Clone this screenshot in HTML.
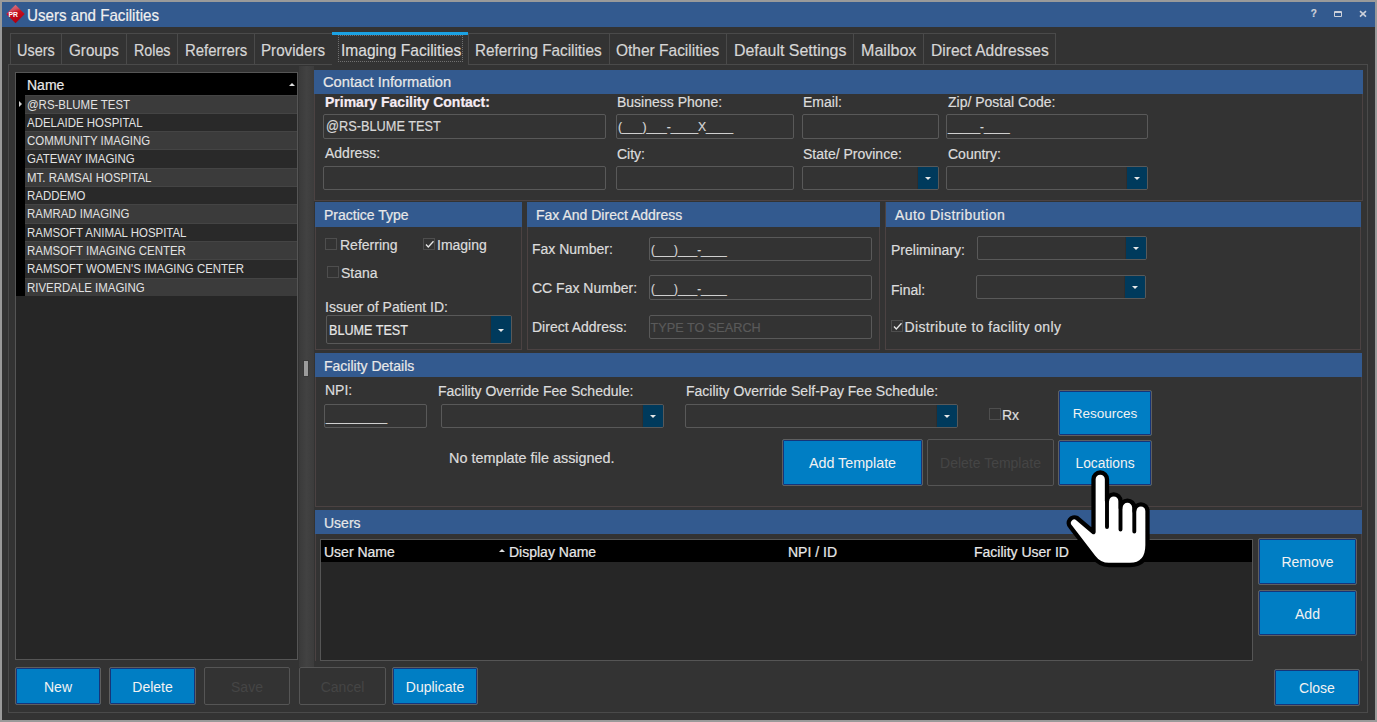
<!DOCTYPE html>
<html><head><meta charset="utf-8">
<style>
*{box-sizing:border-box;margin:0;padding:0}
html,body{width:1377px;height:722px;overflow:hidden;background:#9a9a9a;font-family:"Liberation Sans",sans-serif;color:#dcdcdc;position:relative}
.a{position:absolute}
.t{position:absolute;white-space:nowrap;line-height:1}
.b{position:absolute;white-space:nowrap;line-height:0;height:0;-webkit-text-stroke:0.2px currentColor}
.hdr{position:absolute;background:#335a8f}
.box{position:absolute;border:1px solid #595959;background:#333;border-radius:2px}
.dd{position:absolute;top:0;right:0;bottom:0;width:20px;background:#003a5c;border-radius:0 1px 1px 0;box-shadow:-1px 0 0 #2e2e2e}
.dd:after{content:"";position:absolute;left:7px;top:50%;margin-top:-1px;border-left:3px solid transparent;border-right:3px solid transparent;border-top:3px solid #e8e8e8}
.btn{position:absolute;border-radius:2px;border:1px solid #5f5f5f;background:#007ec4;box-shadow:inset 0 0 0 1px #15357a;color:#f2f2f2;text-align:center;white-space:nowrap}
.dis{position:absolute;border-radius:2px;border:1px solid #555;background:#333;color:#454545;text-align:center;white-space:nowrap}
.cb{position:absolute;width:12px;height:12px;border:1px solid #4e4e4e}
</style></head><body>
<div class="a" style="left:2px;top:2px;width:1373px;height:718px;background:#333333"></div>
<div class="a" style="left:2px;top:2px;width:1373px;height:25px;background:#335a8f"></div>
<svg class="a" style="left:5px;top:4px" width="21" height="21" viewBox="0 0 21 21">
 <defs><linearGradient id="g1" x1="0" y1="0" x2="0.3" y2="1"><stop offset="0" stop-color="#e08088"/><stop offset="0.35" stop-color="#d05060"/><stop offset="0.5" stop-color="#c81020"/><stop offset="1" stop-color="#b00010"/></linearGradient></defs>
 <path d="M10.5 0.8 L19.7 10 L10.5 19.2 L1.2 10 Z" fill="url(#g1)"/>
 <text x="3.4" y="12.8" font-family="Liberation Sans" font-weight="bold" font-size="6.8" fill="#fff">PR</text>
</svg>
<div class="b" style="left:26.5px;top:14.57px;font-size:16.5px;color:#f0f0f0;transform:scaleX(0.917);transform-origin:0 0">Users and Facilities</div>
<div class="b" style="left:1310.8px;top:13.73px;font-size:10px;color:#cdd1da;font-weight:bold">?</div>
<div class="a" style="left:1334px;top:11px;width:8px;height:6px;border:1.5px solid #cdd1da;border-top:2.5px solid #cdd1da;border-radius:1px"></div>
<svg class="a" style="left:1359px;top:10px" width="8" height="8" viewBox="0 0 8 8"><path d="M1 1.2L7 6.6M7 1.2L1 6.6" stroke="#cdd1da" stroke-width="1.6"/></svg>
<div class="a" style="left:10px;top:33px;width:52px;height:32px;border:1px solid #4a4a4a;border-bottom:none"></div>
<div class="b" style="left:17.2px;top:50.38px;font-size:16.2px;color:#d6d6d6;transform:scaleX(0.893);transform-origin:0 0">Users</div>
<div class="a" style="left:61px;top:33px;width:66px;height:32px;border:1px solid #4a4a4a;border-bottom:none"></div>
<div class="b" style="left:69px;top:50.38px;font-size:16.2px;color:#d6d6d6;transform:scaleX(0.94);transform-origin:0 0">Groups</div>
<div class="a" style="left:126px;top:33px;width:52px;height:32px;border:1px solid #4a4a4a;border-bottom:none"></div>
<div class="b" style="left:133.8px;top:50.38px;font-size:16.2px;color:#d6d6d6;transform:scaleX(0.882);transform-origin:0 0">Roles</div>
<div class="a" style="left:177px;top:33px;width:78px;height:32px;border:1px solid #4a4a4a;border-bottom:none"></div>
<div class="b" style="left:184.6px;top:50.38px;font-size:16.2px;color:#d6d6d6;transform:scaleX(0.923);transform-origin:0 0">Referrers</div>
<div class="a" style="left:254px;top:33px;width:79px;height:32px;border:1px solid #4a4a4a;border-bottom:none"></div>
<div class="b" style="left:261.3px;top:50.38px;font-size:16.2px;color:#d6d6d6;transform:scaleX(0.937);transform-origin:0 0">Providers</div>
<div class="a" style="left:468px;top:33px;width:142px;height:32px;border:1px solid #4a4a4a;border-bottom:none"></div>
<div class="b" style="left:475.3px;top:50.38px;font-size:16.2px;color:#d6d6d6;transform:scaleX(0.945);transform-origin:0 0">Referring Facilities</div>
<div class="a" style="left:609px;top:33px;width:118px;height:32px;border:1px solid #4a4a4a;border-bottom:none"></div>
<div class="b" style="left:616.4px;top:50.38px;font-size:16.2px;color:#d6d6d6;transform:scaleX(0.957);transform-origin:0 0">Other Facilities</div>
<div class="a" style="left:726px;top:33px;width:128px;height:32px;border:1px solid #4a4a4a;border-bottom:none"></div>
<div class="b" style="left:734.4px;top:50.38px;font-size:16.2px;color:#d6d6d6;transform:scaleX(0.983);transform-origin:0 0">Default Settings</div>
<div class="a" style="left:853px;top:33px;width:71px;height:32px;border:1px solid #4a4a4a;border-bottom:none"></div>
<div class="b" style="left:861.2px;top:50.38px;font-size:16.2px;color:#d6d6d6;transform:scaleX(0.993);transform-origin:0 0">Mailbox</div>
<div class="a" style="left:923px;top:33px;width:133px;height:32px;border:1px solid #4a4a4a;border-bottom:none"></div>
<div class="b" style="left:931.2px;top:50.38px;font-size:16.2px;color:#d6d6d6;transform:scaleX(0.962);transform-origin:0 0">Direct Addresses</div>
<div class="a" style="left:8px;top:64px;width:1360px;height:649px;border:1px solid #4a4a4a"></div>
<div class="a" style="left:332px;top:32px;width:136px;height:34px;background:#333333"></div>
<div class="a" style="left:332px;top:32px;width:136px;height:3px;background:#1ba2e3"></div>
<div class="a" style="left:338px;top:35px;width:125px;height:27px;border:1px dotted #707070"></div>
<div class="b" style="left:340.8px;top:50.38px;font-size:16.2px;color:#dcdcdc;transform:scaleX(0.962);transform-origin:0 0">Imaging Facilities</div>
<div class="a" style="left:15px;top:72px;width:283px;height:588px;border:1px solid #555;background:#262626"></div>
<div class="a" style="left:16px;top:73px;width:281px;height:22px;background:#000"></div>
<div class="b" style="left:27px;top:85.14px;font-size:14px;color:#e8e8e8;">Name</div>
<div class="a" style="left:289px;top:83px;width:0;height:0;border-left:3px solid transparent;border-right:3px solid transparent;border-bottom:3px solid #dddddd"></div>
<div class="a" style="left:25px;top:95px;width:272px;height:18px;background:#3b3b3b;border-top:1px solid #444"></div>
<div class="b" style="left:27px;top:105.16px;font-size:12.5px;color:#e2e2e2;transform:scaleX(0.916);transform-origin:0 0;-webkit-text-stroke:0">@RS-BLUME TEST</div>
<div class="a" style="left:25px;top:113px;width:272px;height:18px;background:#292929;border-top:1px solid #444"></div>
<div class="b" style="left:27px;top:123.16px;font-size:12.5px;color:#e2e2e2;transform:scaleX(0.916);transform-origin:0 0;-webkit-text-stroke:0">ADELAIDE HOSPITAL</div>
<div class="a" style="left:25px;top:131px;width:272px;height:18px;background:#3b3b3b;border-top:1px solid #444"></div>
<div class="b" style="left:27px;top:141.16px;font-size:12.5px;color:#e2e2e2;transform:scaleX(0.916);transform-origin:0 0;-webkit-text-stroke:0">COMMUNITY IMAGING</div>
<div class="a" style="left:25px;top:149px;width:272px;height:19px;background:#292929;border-top:1px solid #444"></div>
<div class="b" style="left:27px;top:159.16px;font-size:12.5px;color:#e2e2e2;transform:scaleX(0.916);transform-origin:0 0;-webkit-text-stroke:0">GATEWAY IMAGING</div>
<div class="a" style="left:25px;top:168px;width:272px;height:18px;background:#3b3b3b;border-top:1px solid #444"></div>
<div class="b" style="left:27px;top:178.16px;font-size:12.5px;color:#e2e2e2;transform:scaleX(0.916);transform-origin:0 0;-webkit-text-stroke:0">MT. RAMSAI HOSPITAL</div>
<div class="a" style="left:25px;top:186px;width:272px;height:18px;background:#292929;border-top:1px solid #444"></div>
<div class="b" style="left:27px;top:196.16px;font-size:12.5px;color:#e2e2e2;transform:scaleX(0.916);transform-origin:0 0;-webkit-text-stroke:0">RADDEMO</div>
<div class="a" style="left:25px;top:204px;width:272px;height:19px;background:#3b3b3b;border-top:1px solid #444"></div>
<div class="b" style="left:27px;top:214.16px;font-size:12.5px;color:#e2e2e2;transform:scaleX(0.916);transform-origin:0 0;-webkit-text-stroke:0">RAMRAD IMAGING</div>
<div class="a" style="left:25px;top:223px;width:272px;height:18px;background:#292929;border-top:1px solid #444"></div>
<div class="b" style="left:27px;top:233.16px;font-size:12.5px;color:#e2e2e2;transform:scaleX(0.916);transform-origin:0 0;-webkit-text-stroke:0">RAMSOFT ANIMAL HOSPITAL</div>
<div class="a" style="left:25px;top:241px;width:272px;height:18px;background:#3b3b3b;border-top:1px solid #444"></div>
<div class="b" style="left:27px;top:251.16px;font-size:12.5px;color:#e2e2e2;transform:scaleX(0.916);transform-origin:0 0;-webkit-text-stroke:0">RAMSOFT IMAGING CENTER</div>
<div class="a" style="left:25px;top:259px;width:272px;height:19px;background:#292929;border-top:1px solid #444"></div>
<div class="b" style="left:27px;top:269.16px;font-size:12.5px;color:#e2e2e2;transform:scaleX(0.916);transform-origin:0 0;-webkit-text-stroke:0">RAMSOFT WOMEN'S IMAGING CENTER</div>
<div class="a" style="left:25px;top:278px;width:272px;height:18px;background:#3b3b3b;border-top:1px solid #444"></div>
<div class="b" style="left:27px;top:288.16px;font-size:12.5px;color:#e2e2e2;transform:scaleX(0.916);transform-origin:0 0;-webkit-text-stroke:0">RIVERDALE IMAGING</div>
<div class="a" style="left:16px;top:95px;width:9px;height:201px;background:#000"></div>
<div class="a" style="left:19px;top:101px;width:0;height:0;border-top:3px solid transparent;border-bottom:3px solid transparent;border-left:3px solid #cfcfcf"></div>
<div class="a" style="left:299px;top:66px;width:15px;height:601px;background:linear-gradient(90deg,#3a3a3a,#424242 50%,#3c3c3c)"></div>
<div class="a" style="left:304px;top:361px;width:4px;height:15px;background:#9c9c9c;box-shadow:0 0 0 1px #393939"></div>
<div class="a" style="left:314px;top:70px;width:1049px;height:131px;border:1px solid #4b4242"></div>
<div class="hdr" style="left:314px;top:70px;width:1049px;height:24px"></div>
<div class="b" style="left:323px;top:82.4px;font-size:14.7px;color:#e8e8e8;">Contact Information</div>
<div class="b" style="left:325px;top:102.14px;font-size:14px;color:#f6ecf4;"><b>Primary Facility Contact:</b></div>
<div class="b" style="left:617px;top:102.14px;font-size:14px;">Business Phone:</div>
<div class="b" style="left:803px;top:102.14px;font-size:14px;">Email:</div>
<div class="b" style="left:948px;top:102.14px;font-size:14px;">Zip/ Postal Code:</div>
<div class="box" style="left:323px;top:114px;width:283px;height:25px;"></div>
<div class="b" style="left:325.5px;top:126.47px;font-size:14.5px;color:#d8d8d8;transform:scaleX(0.88);transform-origin:0 0">@RS-BLUME TEST</div>
<div class="box" style="left:616px;top:114px;width:178px;height:25px;"></div>
<div class="b" style="left:618px;top:126.59px;font-size:12.7px;color:#d8d8d8;transform:scaleX(0.96);transform-origin:0 0">(___)___-____X____</div>
<div class="box" style="left:802px;top:114px;width:137px;height:25px;"></div>
<div class="box" style="left:946px;top:114px;width:202px;height:25px;"></div>
<div class="b" style="left:948px;top:126.59px;font-size:12.7px;color:#d8d8d8;transform:scaleX(0.91);transform-origin:0 0">_____-____</div>
<div class="b" style="left:325px;top:153.14px;font-size:14px;">Address:</div>
<div class="b" style="left:617px;top:154.14px;font-size:14px;">City:</div>
<div class="b" style="left:803px;top:154.14px;font-size:14px;">State/ Province:</div>
<div class="b" style="left:948px;top:154.14px;font-size:14px;">Country:</div>
<div class="box" style="left:323px;top:166px;width:283px;height:24px;"></div>
<div class="box" style="left:616px;top:166px;width:178px;height:24px;"></div>
<div class="box" style="left:802px;top:166px;width:137px;height:24px;"><div class="dd"></div></div>
<div class="box" style="left:946px;top:166px;width:202px;height:24px;"><div class="dd"></div></div>
<div class="a" style="left:315px;top:202px;width:207px;height:148px;border:1px solid #4b4242"></div>
<div class="hdr" style="left:315px;top:202px;width:207px;height:25px"></div>
<div class="b" style="left:324px;top:214.64px;font-size:14px;color:#e8e8e8;">Practice Type</div>
<div class="cb" style="left:325px;top:238px"></div>
<div class="b" style="left:340px;top:245.14px;font-size:14px;">Referring</div>
<div class="cb" style="left:423px;top:238px"><svg width="11" height="11" viewBox="0 0 11 11" style="position:absolute;left:0;top:0"><path d="M2 5.5 L4.3 8 L9.5 2.2" stroke="#e6e6e6" stroke-width="1.3" fill="none"/></svg></div>
<div class="b" style="left:437px;top:245.14px;font-size:14px;">Imaging</div>
<div class="cb" style="left:327px;top:266px"></div>
<div class="b" style="left:341px;top:273.14px;font-size:14px;">Stana</div>
<div class="b" style="left:325px;top:307.14px;font-size:14px;">Issuer of Patient ID:</div>
<div class="box" style="left:326px;top:315px;width:186px;height:29px;"><div class="dd"></div></div>
<div class="b" style="left:328.8px;top:330.47px;font-size:14.5px;color:#e6e6e6;transform:scaleX(0.87);transform-origin:0 0">BLUME TEST</div>
<div class="a" style="left:527px;top:202px;width:353px;height:148px;border:1px solid #4b4242"></div>
<div class="hdr" style="left:527px;top:202px;width:353px;height:25px"></div>
<div class="b" style="left:536px;top:214.64px;font-size:14px;color:#e8e8e8;">Fax And Direct Address</div>
<div class="b" style="left:532px;top:249.14px;font-size:14px;">Fax Number:</div>
<div class="b" style="left:532px;top:288.14px;font-size:14px;">CC Fax Number:</div>
<div class="b" style="left:532px;top:327.14px;font-size:14px;">Direct Address:</div>
<div class="box" style="left:649px;top:237px;width:223px;height:24px;"></div>
<div class="b" style="left:650.5px;top:249.59px;font-size:12.7px;color:#d8d8d8;transform:scaleX(0.91);transform-origin:0 0">(___)___-____</div>
<div class="box" style="left:649px;top:275px;width:223px;height:25px;"></div>
<div class="b" style="left:650.5px;top:288.59px;font-size:12.7px;color:#d8d8d8;transform:scaleX(0.91);transform-origin:0 0">(___)___-____</div>
<div class="box" style="left:649px;top:315px;width:223px;height:24px;"></div>
<div class="b" style="left:650.5px;top:327.59px;font-size:12.7px;color:#5a5a5a;">TYPE TO SEARCH</div>
<div class="a" style="left:885px;top:202px;width:476px;height:148px;border:1px solid #4b4242"></div>
<div class="hdr" style="left:886px;top:202px;width:475px;height:25px"></div>
<div class="b" style="left:895px;top:214.64px;font-size:14px;color:#e8e8e8;letter-spacing:0.44px">Auto Distribution</div>
<div class="b" style="left:891px;top:249.64px;font-size:14px;">Preliminary:</div>
<div class="b" style="left:891px;top:290.14px;font-size:14px;">Final:</div>
<div class="box" style="left:977px;top:236px;width:170px;height:24px;"><div class="dd"></div></div>
<div class="box" style="left:976px;top:275px;width:170px;height:24px;"><div class="dd"></div></div>
<div class="cb" style="left:890.5px;top:320px"><svg width="11" height="11" viewBox="0 0 11 11" style="position:absolute;left:0;top:0"><path d="M2 5.5 L4.3 8 L9.5 2.2" stroke="#e6e6e6" stroke-width="1.3" fill="none"/></svg></div>
<div class="b" style="left:904.5px;top:327.14px;font-size:14px;letter-spacing:0.36px">Distribute to facility only</div>
<div class="a" style="left:315px;top:353px;width:1047px;height:154px;border:1px solid #4b4242"></div>
<div class="hdr" style="left:315px;top:353px;width:1047px;height:24px"></div>
<div class="b" style="left:324px;top:365.64px;font-size:14px;color:#e8e8e8;">Facility Details</div>
<div class="b" style="left:325px;top:390.14px;font-size:14px;">NPI:</div>
<div class="b" style="left:438px;top:391.14px;font-size:14px;">Facility Override Fee Schedule:</div>
<div class="b" style="left:686px;top:391.14px;font-size:14px;">Facility Override Self-Pay Fee Schedule:</div>
<div class="box" style="left:324px;top:404px;width:103px;height:24px;"></div>
<div class="b" style="left:326px;top:416.59px;font-size:12.7px;color:#d8d8d8;transform:scaleX(0.96);transform-origin:0 0">_________</div>
<div class="box" style="left:441px;top:404px;width:223px;height:24px;"><div class="dd"></div></div>
<div class="box" style="left:685px;top:404px;width:273px;height:24px;"><div class="dd"></div></div>
<div class="cb" style="left:989px;top:408px"></div>
<div class="b" style="left:1002px;top:415.14px;font-size:14px;">Rx</div>
<div class="btn" style="left:1058px;top:390px;width:94px;height:46px;line-height:44px;padding-top:1px;font-size:13.5px">Resources</div>
<div class="b" style="left:449px;top:458.0px;font-size:14.4px;">No template file assigned.</div>
<div class="btn" style="left:782px;top:439px;width:141px;height:47px;line-height:45px;padding-top:1px;font-size:14.3px">Add Template</div>
<div class="dis" style="left:927px;top:439px;width:127px;height:47px;line-height:45px;padding-top:1px;font-size:14px">Delete Template</div>
<div class="btn" style="left:1058px;top:440px;width:94px;height:46px;line-height:44px;padding-top:1px;font-size:13.8px">Locations</div>
<div class="a" style="left:315px;top:510px;width:1047px;height:151px;border:1px solid #4b4242;border-bottom:none"></div>
<div class="hdr" style="left:315px;top:510px;width:1047px;height:24px"></div>
<div class="b" style="left:324px;top:522.64px;font-size:14px;color:#e8e8e8;">Users</div>
<div class="a" style="left:320px;top:539px;width:933px;height:122px;border:1px solid #555;background:#262626"></div>
<div class="a" style="left:321px;top:540px;width:931px;height:22px;background:#000"></div>
<div class="b" style="left:324px;top:552.14px;font-size:14px;color:#e8e8e8;">User Name</div>
<div class="a" style="left:499px;top:549px;width:0;height:0;border-left:3px solid transparent;border-right:3px solid transparent;border-bottom:3px solid #dddddd"></div>
<div class="b" style="left:509px;top:552.14px;font-size:14px;color:#e8e8e8;">Display Name</div>
<div class="b" style="left:788px;top:552.14px;font-size:14px;color:#e8e8e8;">NPI / ID</div>
<div class="b" style="left:974px;top:552.14px;font-size:14px;color:#e8e8e8;">Facility User ID</div>
<div class="btn" style="left:1258px;top:538px;width:99px;height:47px;line-height:45px;padding-top:1px;font-size:14px">Remove</div>
<div class="btn" style="left:1258px;top:590px;width:99px;height:46px;line-height:44px;padding-top:1px;font-size:14px">Add</div>
<div class="btn" style="left:15px;top:667px;width:86px;height:38px;line-height:36px;padding-top:1px;font-size:14px">New</div>
<div class="btn" style="left:109px;top:667px;width:87px;height:38px;line-height:36px;padding-top:1px;font-size:14px">Delete</div>
<div class="dis" style="left:204px;top:667px;width:86px;height:38px;line-height:36px;padding-top:1px;font-size:14px">Save</div>
<div class="dis" style="left:299px;top:667px;width:87px;height:38px;line-height:36px;padding-top:1px;font-size:14px">Cancel</div>
<div class="btn" style="left:392px;top:667px;width:86px;height:38px;line-height:36px;padding-top:1px;font-size:14px">Duplicate</div>
<div class="btn" style="left:1274px;top:669px;width:86px;height:37px;line-height:35px;padding-top:1px;font-size:14px">Close</div>
<svg class="a" style="left:1060px;top:465px" width="100" height="110" viewBox="0 0 100 110">
<path d="M17 53 L33.5 67 L33.5 14.25 A6.75 6.75 0 0 1 47 14.25 L47 36.05 A6.75 6.75 0 0 1 60.5 36.05 L60.5 42.5 A6.9 6.9 0 0 1 74.3 42.5 L74.3 46 A6.6 6.6 0 0 1 87.5 46 L87.5 80 Q87.5 100 70 100 L49 100 Q39.5 100 33.5 92 L10.5 62 A5.6 5.6 0 0 1 17 53 Z" fill="#fff" stroke="#000" stroke-width="4.3" stroke-linejoin="round"/>
<path d="M47 37 L47 62 M60.5 43.5 L60.5 64.5 M74.3 47 L74.3 66.5" stroke="#000" stroke-width="3.9" stroke-linecap="round"/>
</svg>
</body></html>
